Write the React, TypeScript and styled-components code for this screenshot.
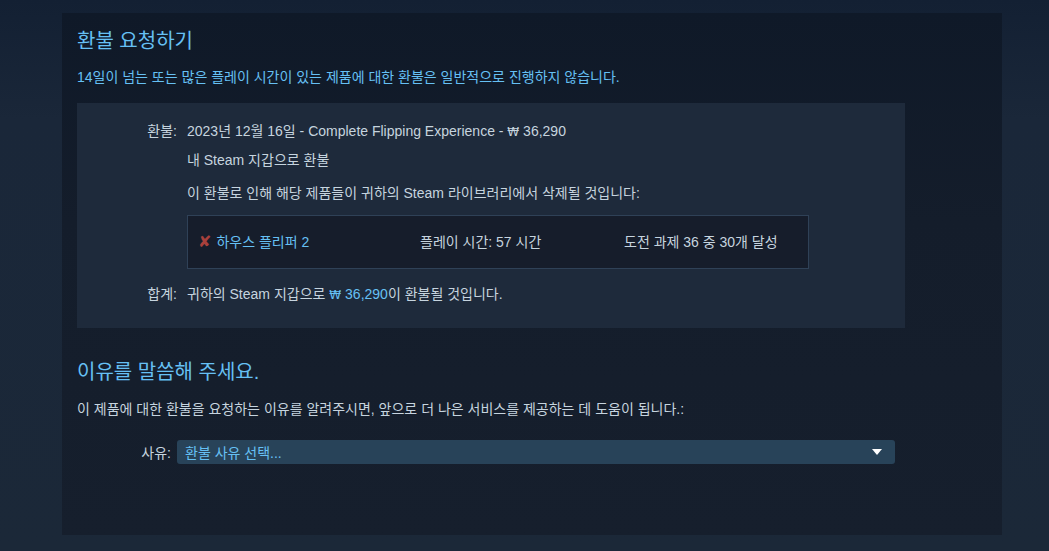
import {FC} from 'react'
import styled, {createGlobalStyle} from 'styled-components'

const GlobalStyle = createGlobalStyle`
  html, body {
    margin: 0;
    padding: 0;
  }

  body {
    min-height: 100vh;
    background: linear-gradient(to bottom, #132033 0%, #1a2739 120px, #1b2838 100%);
    font-family: "Liberation Sans", "Noto Sans CJK KR", sans-serif;
    font-size: 14px;
    color: #c6d4df;
  }
`

const Page: FC = () => (
  <Wrapper>
    <Panel>
      <Title>환불 요청하기</Title>
      <Notice>14일이 넘는 또는 많은 플레이 시간이 있는 제품에 대한 환불은 일반적으로 진행하지 않습니다.</Notice>

      <RefundBox>
        <Label>환불:</Label>
        <Value>
          <Line>2023년 12월 16일 - Complete Flipping Experience - <Won>₩</Won> 36,290</Line>
          <Line gap={9}>내 Steam 지갑으로 환불</Line>
          <Line gap={13}>이 환불로 인해 해당 제품들이 귀하의 Steam 라이브러리에서 삭제될 것입니다:</Line>
          <GameBox>
            <GameName>
              <Cross>✘</Cross>
              하우스 플리퍼 2
            </GameName>
            <span>플레이 시간: 57 시간</span>
            <span>도전 과제 36 중 30개 달성</span>
          </GameBox>
        </Value>

        <Label top={15}>합계:</Label>
        <Value top={15}>
          <Line>귀하의 Steam 지갑으로 <Price><Won>₩</Won> 36,290</Price>이 환불될 것입니다.</Line>
        </Value>
      </RefundBox>

      <Title top={32}>이유를 말씀해 주세요.</Title>
      <Description>이 제품에 대한 환불을 요청하는 이유를 알려주시면, 앞으로 더 나은 서비스를 제공하는 데 도움이 됩니다.:</Description>

      <ReasonRow>
        <ReasonLabel>사유:</ReasonLabel>
        <Select>
          <span>환불 사유 선택...</span>
          <Arrow viewBox="0 0 10 6">
            <path d="M0 0 L10 0 L5 6 Z" fill="#ffffff"/>
          </Arrow>
        </Select>
      </ReasonRow>
    </Panel>
  </Wrapper>
)

export default function App() {
  return (
    <>
      <GlobalStyle/>
      <Page/>
    </>
  )
}

const Wrapper = styled.div`
  padding-top: 13px;
  padding-left: 62px;
`

const Panel = styled.div`
  width: 910px;
  height: 506px;
  padding: 16px 15px 0;
  background: linear-gradient(to bottom, #0f1928 0%, #141d2b 40%, #161f2d 100%);
`

const Title = styled.h2<{top?: number}>`
  margin: ${p => p.top ?? 0}px 0 0;
  font-size: 20px;
  line-height: 24px;
  font-weight: normal;
  color: #66c0f4;
`

const Notice = styled.p`
  margin: 14px 0 0;
  line-height: 20px;
  color: #66c0f4;
`

const RefundBox = styled.div`
  display: grid;
  grid-template-columns: 100px 1fr;
  column-gap: 10px;
  width: 828px;
  box-sizing: border-box;
  margin-top: 16px;
  padding: 18px 0 24px;
  background: #1e2a3b;
`

const Label = styled.div<{top?: number}>`
  margin-top: ${p => p.top ?? 0}px;
  line-height: 20px;
  text-align: right;
`

const Value = styled.div<{top?: number}>`
  margin-top: ${p => p.top ?? 0}px;
`

const Line = styled.div<{gap?: number}>`
  height: 20px;
  margin-top: ${p => p.gap ?? 0}px;
  line-height: 20px;
`

const Won = styled.span`
  font-family: "DejaVu Sans", sans-serif;
  font-size: 12px;
  line-height: 0;
`

const Price = styled.span`
  color: #66c0f4;
`

const GameBox = styled.div`
  display: grid;
  grid-template-columns: 222px 204px 1fr;
  align-items: center;
  width: 622px;
  height: 54px;
  box-sizing: border-box;
  margin-top: 12px;
  padding-left: 10px;
  border: 1px solid #2f4157;
  background: #161d2b;
  line-height: 20px;
`

const GameName = styled.span`
  display: flex;
  align-items: center;
  gap: 5px;
  color: #66c0f4;
`

const Cross = styled.span`
  font-family: "DejaVu Sans", sans-serif;
  font-size: 16px;
  color: #a8403c;
`

const Description = styled.p`
  margin: 15px 0 0;
  line-height: 20px;
`

const ReasonRow = styled.div`
  display: flex;
  align-items: center;
  gap: 6px;
  margin-top: 21px;
`

const ReasonLabel = styled.span`
  width: 94px;
  text-align: right;
`

const Select = styled.div`
  display: flex;
  align-items: center;
  justify-content: space-between;
  width: 718px;
  height: 24px;
  box-sizing: border-box;
  padding: 0 13px 0 8px;
  border-radius: 3px;
  background: #284359;
  color: #66c0f4;
`

const Arrow = styled.svg`
  width: 10px;
  height: 6px;
`
